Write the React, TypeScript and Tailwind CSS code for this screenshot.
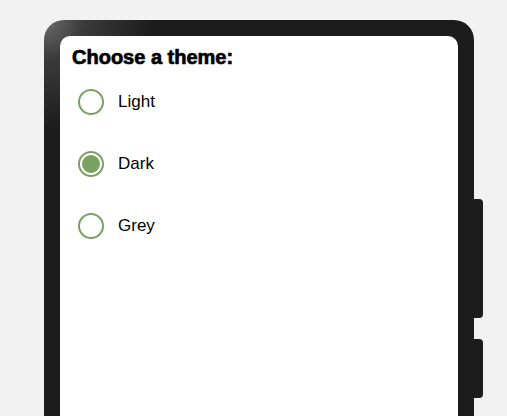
import React from 'react';

const themes = ['Light', 'Dark', 'Grey'];

export default function App() {
  const [theme, setTheme] = React.useState('Dark');

  return (
    <div className="w-[507px] h-[416px] overflow-hidden bg-[#f2f2f2] font-['Liberation_Sans',Arial,sans-serif]">
      <div className="relative ml-[44px] mt-[20px] w-[430px] h-[420px] rounded-t-[20px] bg-[#1c1c1c] bg-[radial-gradient(circle_at_0px_0px,#6e6e6e_0px,#3a3a3a_40px,#1c1c1c_110px)] px-[16px] pt-[16px]">
        {/* side buttons */}
        <div className="absolute right-[-9px] top-[179px] w-[9px] h-[119px] rounded-r-[4px] bg-[#1c1c1c]" />
        <div className="absolute right-[-9px] top-[319px] w-[9px] h-[59px] rounded-r-[4px] bg-[#1c1c1c]" />

        <div className="h-full rounded-t-[10px] bg-white pl-[12px] pt-[10px]">
          <h1 className="text-[20px] leading-[23px] font-bold text-black [-webkit-text-stroke:0.7px_black]">
            Choose a theme:
          </h1>
          <div className="mt-[2px] flex flex-col">
            {themes.map((t) => (
              <label key={t} className="flex h-[62px] items-center cursor-pointer" onClick={() => setTheme(t)}>
                <span className="relative ml-[6px] size-[26px] rounded-full border-2 border-[#79a160] bg-white">
                  {theme === t && (
                    <span className="absolute inset-[2px] rounded-full bg-[#79a160]" />
                  )}
                </span>
                <span className="ml-[14px] text-[17px] text-black">{t}</span>
              </label>
            ))}
          </div>
        </div>
      </div>
    </div>
  );
}
